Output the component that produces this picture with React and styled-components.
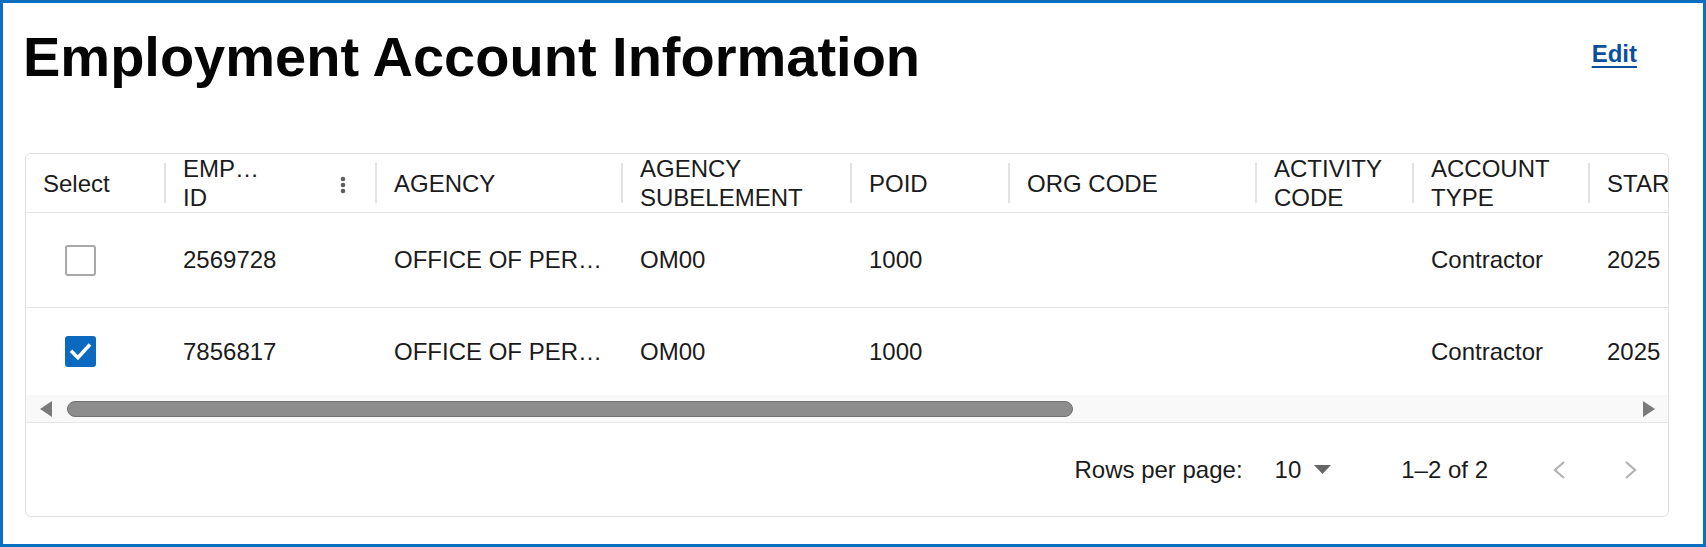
import React from 'react'
import styled, { createGlobalStyle } from 'styled-components'

const GlobalStyle = createGlobalStyle`
    html, body {
        margin: 0;
        padding: 0;
        background: #ffffff;
    }
    body {
        font-family: "Liberation Sans", Arial, sans-serif;
    }
`

const columns = [
    { key: 'select', label: 'Select', width: 140 },
    { key: 'empId', label: ['EMP…', 'ID'], width: 211, menu: true },
    { key: 'agency', label: 'AGENCY', width: 246 },
    { key: 'sub', label: 'AGENCY SUBELEMENT', width: 229 },
    { key: 'poid', label: 'POID', width: 158 },
    { key: 'org', label: 'ORG CODE', width: 247 },
    { key: 'activity', label: 'ACTIVITY CODE', width: 157 },
    { key: 'type', label: 'ACCOUNT TYPE', width: 176 },
    { key: 'start', label: 'STAR', width: 200 },
]

const rows = [
    { id: 1, checked: false, empId: '2569728', agency: 'OFFICE OF PER…', sub: 'OM00', poid: '1000', org: '', activity: '', type: 'Contractor', start: '2025' },
    { id: 2, checked: true, empId: '7856817', agency: 'OFFICE OF PER…', sub: 'OM00', poid: '1000', org: '', activity: '', type: 'Contractor', start: '2025' },
]

const Page = styled.div`
    box-sizing: border-box;
    width: 1706px;
    height: 547px;
    border: 3px solid #0b6fc1;
    padding: 22px 34px 0 22px;
    color: #1b1b1b;
`

const TitleBar = styled.div`
    display: flex;
    justify-content: space-between;
    align-items: flex-start;
`

const Title = styled.h1`
    margin: 0 0 0 -2px;
    font-size: 56px;
    line-height: 64px;
    font-weight: 700;
    color: #050505;
`

const EditLink = styled.a`
    margin: 15px 32px 0 0;
    font-size: 24px;
    line-height: 28px;
    font-weight: 700;
    color: #0b4f9c;
    text-decoration: underline;
    text-decoration-thickness: 2px;
    text-underline-offset: 4px;
    cursor: pointer;
`

const Card = styled.div`
    margin-top: 64px;
    border: 1px solid #e0e0e0;
    border-radius: 6px;
    overflow: hidden;
    font-size: 24px;
`

const Viewport = styled.div`
    overflow: hidden;
`

const HeaderRow = styled.div`
    display: flex;
    height: 58px;
    border-bottom: 1px solid #e4e4e4;
`

const HeaderCell = styled.div`
    position: relative;
    flex: 0 0 ${p => p.$width}px;
    box-sizing: border-box;
    display: flex;
    align-items: center;
    padding: 0 17px;
    line-height: 29px;

    &::after {
        content: '';
        position: absolute;
        right: 0;
        top: 50%;
        width: 2px;
        height: 40px;
        transform: translateY(-50%);
        background: #e2e2e2;
    }
`

const HeaderLabel = styled.div`
    flex: 1;
`

const Kebab = styled.svg`
    flex: 0 0 auto;
    margin: 4px 7px 0 0;
`

const Row = styled.div`
    display: flex;
    height: ${p => p.$height}px;
    border-bottom: ${p => (p.$divider ? '1px solid #e4e4e4' : 'none')};
`

const Cell = styled.div`
    flex: 0 0 ${p => p.$width}px;
    box-sizing: border-box;
    display: flex;
    align-items: center;
    padding: 0 17px;
    min-width: 0;
`

const CellText = styled.span`
    white-space: nowrap;
`

const Box = styled.span`
    box-sizing: border-box;
    width: 31px;
    height: 31px;
    margin-left: 22px;
    border-radius: 3px;
    border: ${p => (p.$checked ? 'none' : '2.5px solid #a8a8a8')};
    background: ${p => (p.$checked ? '#0b6abf' : '#ffffff')};
    display: flex;
    align-items: center;
    justify-content: center;
`

const ScrollTrack = styled.div`
    display: flex;
    align-items: center;
    height: 27px;
    background: #f9f9f9;
    border-bottom: 1px solid #e6e6e6;
`

const Arrow = styled.svg`
    flex: 0 0 auto;
    margin-left: ${p => p.$left || 0};
    margin-right: ${p => p.$right || 0};
`

const Thumb = styled.div`
    box-sizing: border-box;
    width: ${p => p.$width}px;
    height: 16px;
    margin-left: 15px;
    border-radius: 8px;
    background: #8d8d8d;
    border: 1px solid #727272;
`

const Footer = styled.div`
    display: flex;
    justify-content: flex-end;
    align-items: center;
    height: 93px;
    padding-right: 31px;
`

const FooterText = styled.span`
    margin-left: ${p => p.$gap || 0}px;
    white-space: nowrap;
`

const Caret = styled.svg`
    margin-left: 13px;
`

const PageButton = styled.svg`
    margin-left: ${p => p.$gap}px;
`

function Checkbox({ checked }) {
    return (
        <Box $checked={checked}>
            {checked && (
                <svg width="31" height="31" viewBox="0 0 30 30">
                    <polyline points="7,15.5 12.5,21 23,9.5" fill="none" stroke="#ffffff" strokeWidth="3.4" strokeLinecap="square" />
                </svg>
            )}
        </Box>
    )
}

function Header() {
    return (
        <HeaderRow>
            {columns.map(col => (
                <HeaderCell key={col.key} $width={col.width}>
                    <HeaderLabel>
                        {Array.isArray(col.label)
                            ? col.label.map(line => <div key={line}>{line}</div>)
                            : col.label}
                    </HeaderLabel>
                    {col.menu && (
                        <Kebab width="20" height="24" viewBox="0 0 20 24">
                            <circle cx="10" cy="6" r="2.3" fill="#5f5f5f" />
                            <circle cx="10" cy="12" r="2.3" fill="#5f5f5f" />
                            <circle cx="10" cy="18" r="2.3" fill="#5f5f5f" />
                        </Kebab>
                    )}
                </HeaderCell>
            ))}
        </HeaderRow>
    )
}

export default function App() {
    return (
        <>
            <GlobalStyle />
            <Page>
                <TitleBar>
                    <Title>Employment Account Information</Title>
                    <EditLink>Edit</EditLink>
                </TitleBar>
                <Card>
                    <Viewport>
                        <Header />
                        {rows.map((row, i) => (
                            <Row key={row.id} $height={i === 0 ? 94 : 87} $divider={i === 0}>
                                {columns.map(col => (
                                    <Cell key={col.key} $width={col.width}>
                                        {col.key === 'select'
                                            ? <Checkbox checked={row.checked} />
                                            : <CellText>{row[col.key]}</CellText>}
                                    </Cell>
                                ))}
                            </Row>
                        ))}
                    </Viewport>
                    <ScrollTrack>
                        <Arrow $left="14px" width="12" height="16" viewBox="0 0 12 16">
                            <polygon points="12,0 12,16 0,8" fill="#7a7a7a" />
                        </Arrow>
                        <Thumb $width={1006} />
                        <Arrow $left="auto" $right="13px" width="12" height="16" viewBox="0 0 12 16">
                            <polygon points="0,0 0,16 12,8" fill="#7a7a7a" />
                        </Arrow>
                    </ScrollTrack>
                    <Footer>
                        <FooterText>Rows per page:</FooterText>
                        <FooterText $gap={32}>10</FooterText>
                        <Caret width="17" height="9" viewBox="0 0 17 9">
                            <polygon points="0,0 17,0 8.5,9" fill="#666666" />
                        </Caret>
                        <FooterText $gap={70}>1–2 of 2</FooterText>
                        <PageButton $gap={65} width="13" height="18" viewBox="0 0 13 18">
                            <polyline points="11,1 2,9 11,17" fill="none" stroke="#b3b3b3" strokeWidth="2.2" />
                        </PageButton>
                        <PageButton $gap={58} width="13" height="18" viewBox="0 0 13 18">
                            <polyline points="2,1 11,9 2,17" fill="none" stroke="#b3b3b3" strokeWidth="2.2" />
                        </PageButton>
                    </Footer>
                </Card>
            </Page>
        </>
    )
}
